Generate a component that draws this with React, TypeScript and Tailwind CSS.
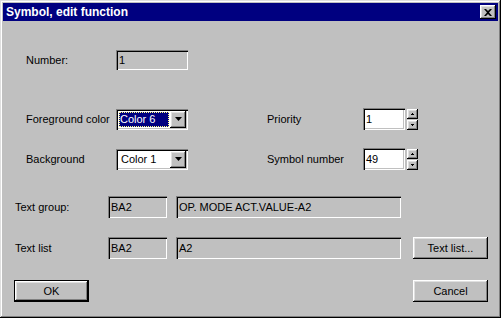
import React from "react";

const font = { fontFamily: '"Liberation Sans", Arial, sans-serif' };

const sunken =
  "shadow-[inset_1px_1px_0_#808080,inset_2px_2px_0_#000,inset_-1px_-1px_0_#fff,inset_-2px_-2px_0_#c0c0c0]";
const raised =
  "shadow-[inset_-1px_-1px_0_#000,inset_1px_1px_0_#fff,inset_-2px_-2px_0_#808080,inset_2px_2px_0_#dfdfdf]";

function Field({ value, w, white }: { value: string; w: string; white?: boolean }) {
  return (
    <div
      className={`${w} h-full ${sunken} ${white ? "bg-white" : "bg-[#c0c0c0]"} pl-[3px] flex items-center text-[11px] text-black`}
    >
      {value}
    </div>
  );
}

function Combo({ value, focused }: { value: string; focused?: boolean }) {
  return (
    <div className={`w-[72px] h-[21px] ${sunken} bg-white flex items-center p-[2px]`}>
      <div className="flex-1 h-full flex items-center pl-[1px] pr-[1px]">
        {focused ? (
          <div className="w-full h-[15px] bg-[#000080] text-white text-[11px] flex items-center pl-[1px] outline-1 outline-dotted outline-[#ffff80] -outline-offset-1">
            {value}
          </div>
        ) : (
          <div className="w-full text-[11px] pl-[2px]">{value}</div>
        )}
      </div>
      <div className={`w-[16px] h-full bg-[#c0c0c0] ${raised} flex items-center justify-center`}>
        <svg width="7" height="4" viewBox="0 0 7 4">
          <path d="M0 0h7L3.5 4z" fill="#000" />
        </svg>
      </div>
    </div>
  );
}

function Spin({ value }: { value: string }) {
  return (
    <div className="flex h-full gap-[2px]">
      <Field value={value} w="w-[42px]" white />
      <div className="flex flex-col w-[11px] h-full gap-[1px] pt-[1px]">
        <div className={`flex-1 bg-[#c0c0c0] ${raised} flex items-center justify-center`}>
          <svg width="3" height="2" viewBox="0 0 3 2">
            <path d="M1 0h1v1h1v1H0V1h1z" fill="#000" />
          </svg>
        </div>
        <div className={`flex-1 bg-[#c0c0c0] ${raised} flex items-center justify-center`}>
          <svg width="3" height="2" viewBox="0 0 3 2">
            <path d="M0 0h3v1H2v1H1V1H0z" fill="#000" />
          </svg>
        </div>
      </div>
    </div>
  );
}

function Button({ label, isDefault }: { label: string; isDefault?: boolean }) {
  return (
    <div className={`w-[75px] h-[22px] ${isDefault ? "border border-black" : ""}`}>
      <div className={`w-full h-full bg-[#c0c0c0] ${raised} flex items-center justify-center text-[11px] text-black`}>
        {label}
      </div>
    </div>
  );
}

export default function App() {
  return (
    <div style={font} className="w-[501px] h-[318px] bg-[#c0c0c0] text-black">
      <div className="w-full h-full p-[3px] shadow-[inset_-1px_-1px_0_#000,inset_1px_1px_0_#dfdfdf,inset_-2px_-2px_0_#808080,inset_2px_2px_0_#fff] flex flex-col">
        {/* Title bar */}
        <div className="h-[18px] bg-[#000080] flex items-center justify-between pl-[3px] pr-[2px]">
          <span className="text-white font-bold text-[12px] leading-none">Symbol, edit function</span>
          <div className={`w-[16px] h-[14px] bg-[#c0c0c0] ${raised} flex items-center justify-center`}>
            <svg width="8" height="7" viewBox="0 0 8 7">
              <path d="M0 0h2l2 2 2-2h2L5 3.5 8 7H6L4 5 2 7H0l3-3.5z" fill="#000" />
            </svg>
          </div>
        </div>

        {/* Number */}
        <div className="flex items-center h-[20px] mt-[29px] pl-[23px]">
          <span className="w-[90px] text-[11px]">Number:</span>
          <Field value="1" w="w-[72px]" />
        </div>

        {/* Foreground / Priority */}
        <div className="flex items-center h-[22px] mt-[38px] pl-[23px]">
          <span className="w-[90px] text-[11px]">Foreground color</span>
          <Combo value="Color 6" focused />
          <span className="ml-[79px] w-[96px] text-[11px]">Priority</span>
          <Spin value="1" />
        </div>

        {/* Background / Symbol number */}
        <div className="flex items-center h-[22px] mt-[18px] pl-[23px]">
          <span className="w-[90px] text-[11px]">Background</span>
          <Combo value="Color 1" />
          <span className="ml-[79px] w-[96px] text-[11px]">Symbol number</span>
          <Spin value="49" />
        </div>

        {/* Text group */}
        <div className="flex items-center h-[22px] mt-[26px] pl-[12px]">
          <span className="w-[93px] text-[11px]">Text group:</span>
          <Field value="BA2" w="w-[59px]" />
          <div className="w-[9px]" />
          <Field value="OP. MODE ACT.VALUE-A2" w="w-[225px]" />
        </div>

        {/* Text list */}
        <div className="flex items-center h-[22px] mt-[19px] pl-[12px]">
          <span className="w-[93px] text-[11px]">Text list</span>
          <Field value="BA2" w="w-[59px]" />
          <div className="w-[9px]" />
          <Field value="A2" w="w-[225px]" />
          <div className="ml-[12px]">
            <Button label="Text list..." />
          </div>
        </div>

        {/* OK / Cancel */}
        <div className="flex items-center justify-between h-[22px] mt-[21px] pl-[11px] pr-[10px]">
          <Button label="OK" isDefault />
          <Button label="Cancel" />
        </div>
      </div>
    </div>
  );
}
